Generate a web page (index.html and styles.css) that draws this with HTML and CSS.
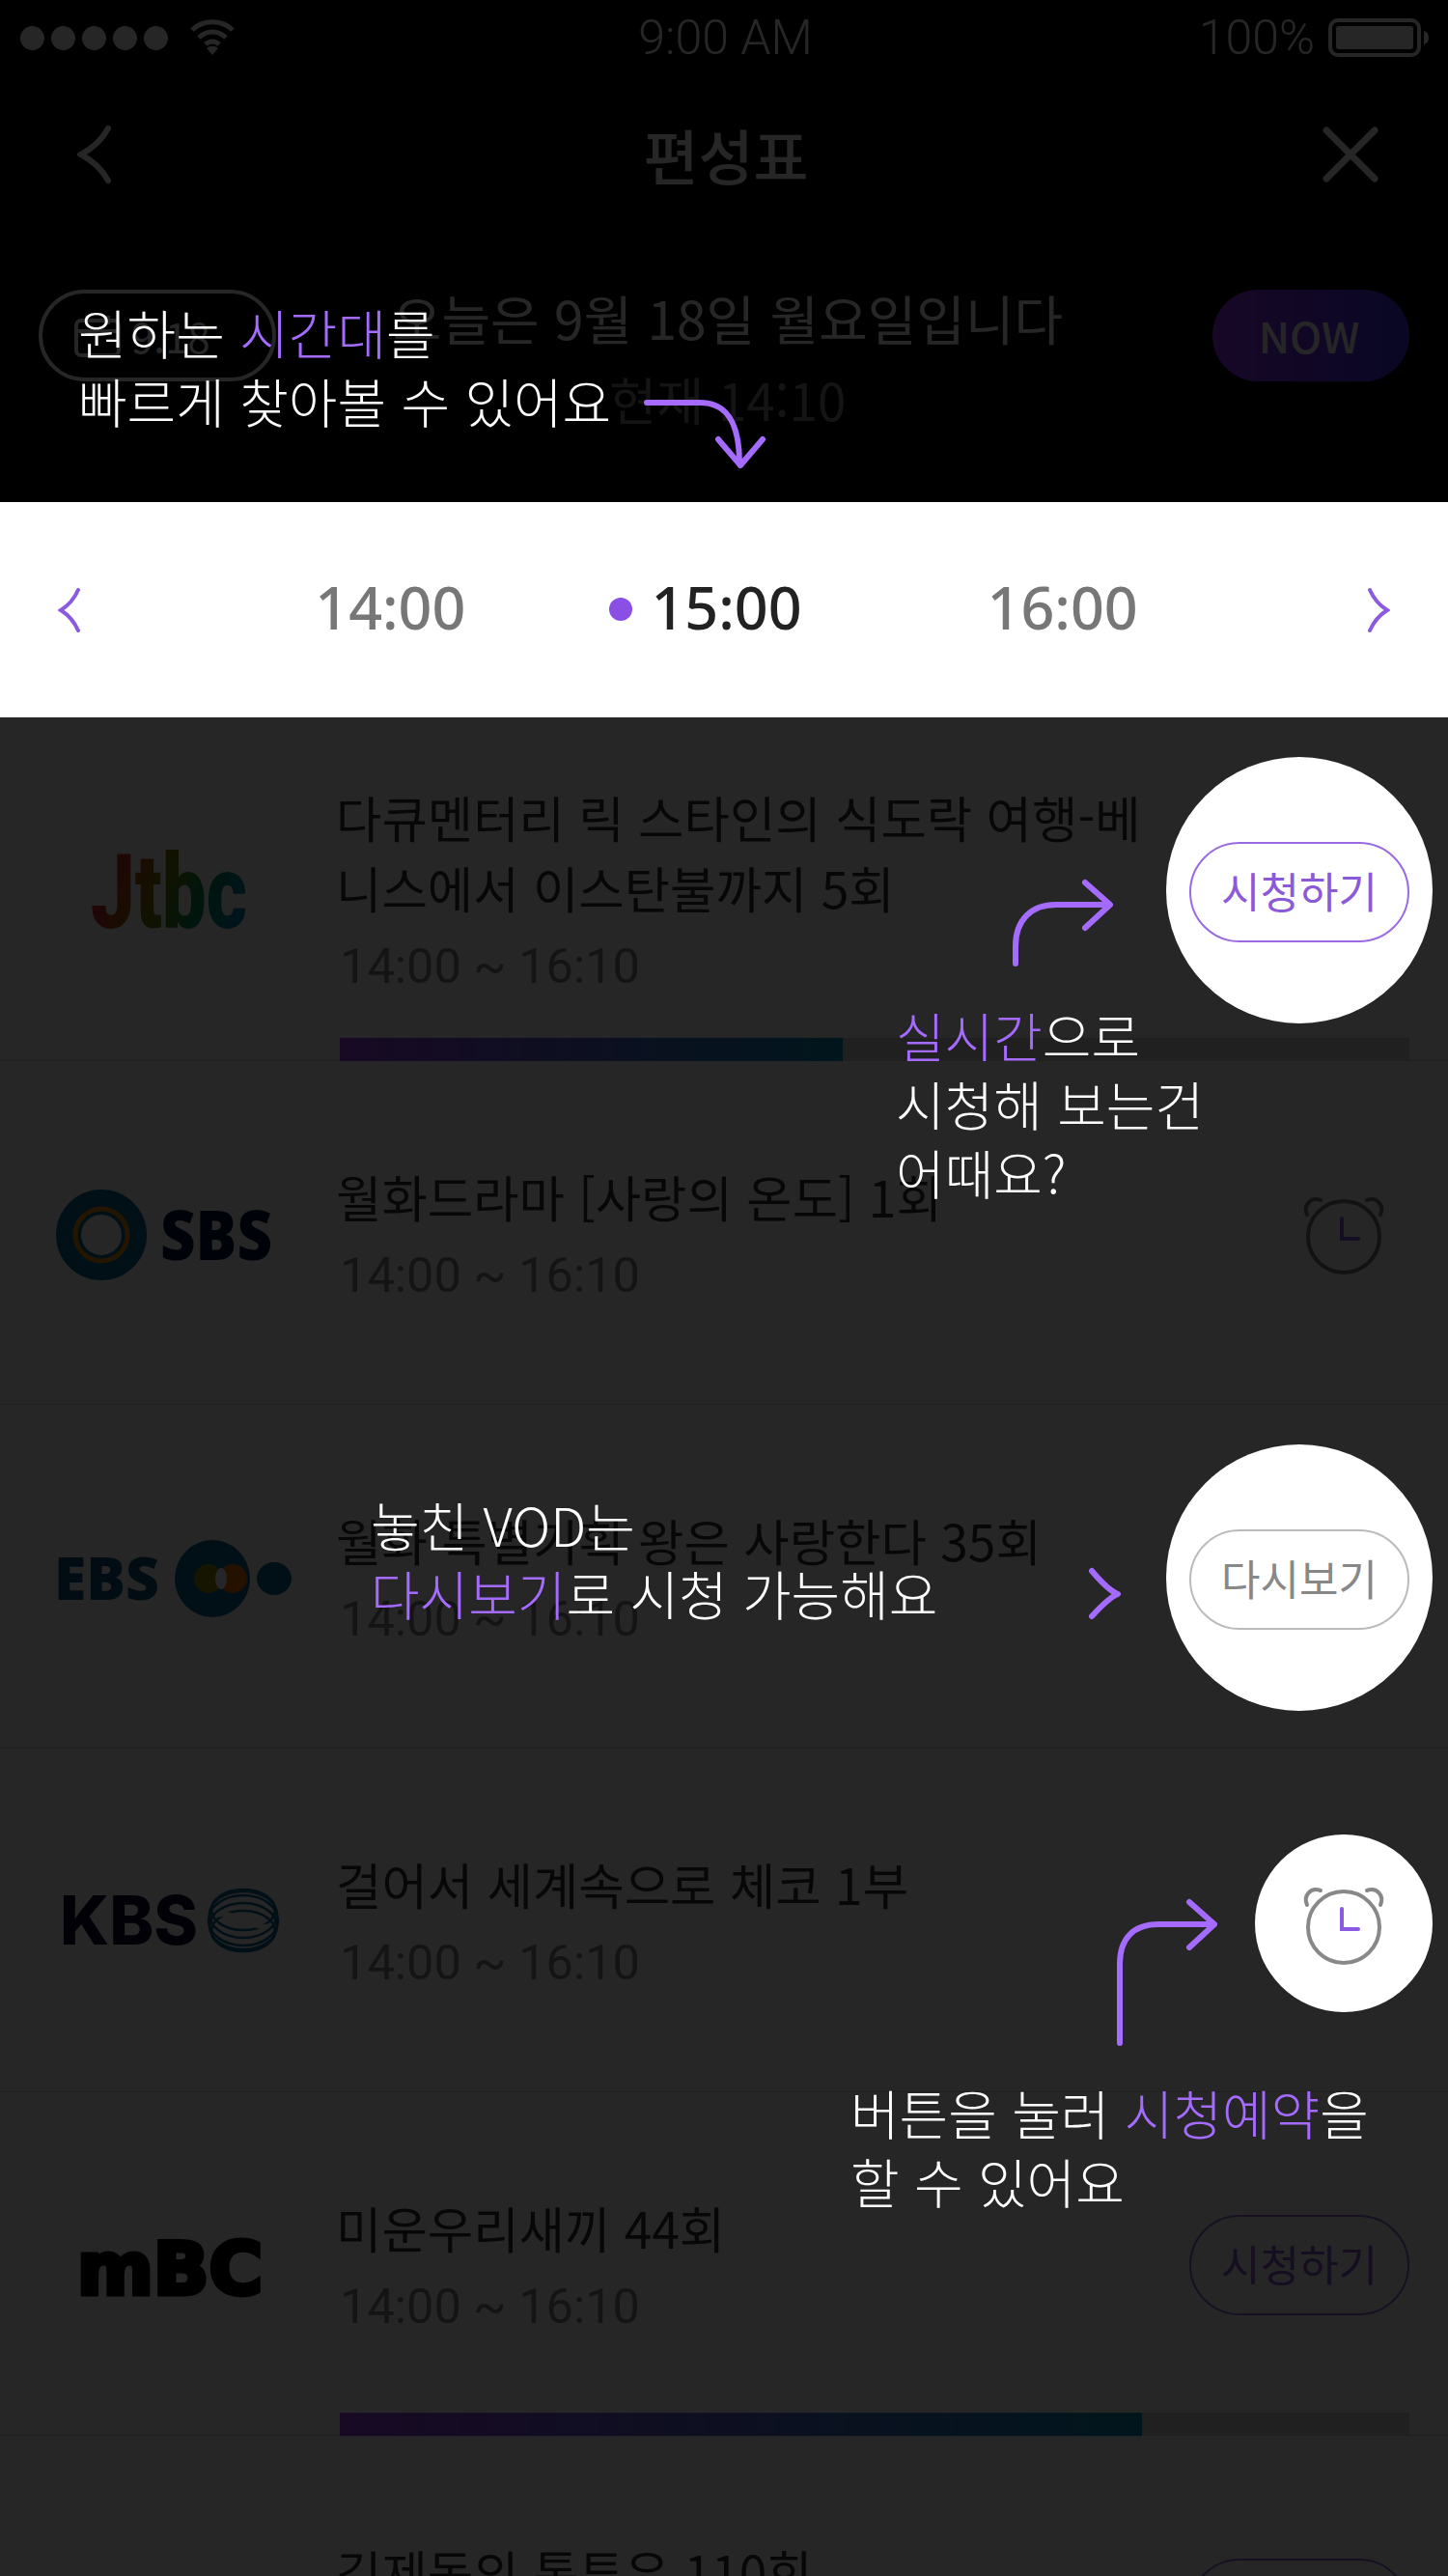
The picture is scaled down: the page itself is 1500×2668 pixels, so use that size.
FILE: index.html
```html
<!DOCTYPE html>
<html lang="ko">
  <head>
    <meta charset="utf-8" />
    <title>편성표</title>
    <link rel="stylesheet" href="styles.css">
  </head>

  <body>
    <div id="page">
      <header class="top dim">
        <div class="statusBar">
          <div class="signal">
            <span class="dot"></span><span class="dot"></span><span class="dot"></span><span class="dot"></span><span class="dot"></span>
            <svg class="wifi" width="48" height="38" viewBox="0 0 48 38" fill="none" stroke="#fff" stroke-width="5">
              <path d="M3 11 C14 0 34 0 45 11" />
              <path d="M10 19 C18 11 30 11 38 19" />
              <path d="M17 26 C21 22 27 22 31 26" />
              <path d="M24 37 L18 30 C22 27 26 27 30 30 Z" fill="#fff" stroke="none" />
            </svg>
          </div>
          <div class="clock">9:00 AM</div>
          <div class="power">
            <span>100%</span>
            <svg width="106" height="40" viewBox="0 0 106 40" fill="none">
              <rect x="2" y="2" width="92" height="36" rx="8" stroke="#fff" stroke-width="4" />
              <rect x="8" y="8" width="80" height="24" rx="3" fill="#fff" />
              <path d="M99 13 C103 14 104 17 104 20 C104 23 103 26 99 27 Z" fill="#fff" />
            </svg>
          </div>
        </div>

        <nav class="navBar">
          <svg width="36" height="60" viewBox="0 0 36 60" fill="none" stroke="#fff" stroke-width="6" stroke-linecap="round">
            <path d="M32 3 C25 16 15 24 4 30 C15 36 25 44 32 57" />
          </svg>
          <h1 class="navTitle">편성표</h1>
          <svg class="navClose" width="58" height="58" viewBox="0 0 58 58" fill="none" stroke="#fff" stroke-width="7" stroke-linecap="round">
            <path d="M4 4 L54 54 M54 4 L4 54" />
          </svg>
        </nav>

        <div class="dateRow">
          <div class="datePill">
            <svg width="50" height="44" viewBox="0 0 50 44" fill="none" stroke="#fff" stroke-width="4">
              <rect x="3" y="6" width="44" height="36" rx="5" />
              <path d="M3 17 H47 M14 1 V10 M36 1 V10" />
            </svg>
            <span>9.18</span>
          </div>
          <div class="dateText">
            <div class="dateToday">오늘은 9월 18일 월요일입니다</div>
            <div class="dateNow">현재 14:10</div>
          </div>
          <div class="nowPill">NOW</div>
        </div>
      </header>

      <div class="timeBar">
        <svg class="timeArrow" width="24" height="46" viewBox="0 0 24 46" fill="none">
          <path d="M21 2 C17 11 11 18 3 23 C11 28 17 35 21 44" />
        </svg>
        <div class="times">
          <span class="time">14:00</span>
          <span class="time timeCurrent">15:00</span>
          <span class="time">16:00</span>
        </div>
        <svg class="timeArrow" width="24" height="46" viewBox="0 0 24 46" fill="none">
          <path d="M3 2 C7 11 13 18 21 23 C13 28 7 35 3 44" />
        </svg>
      </div>

      <main class="list dim">
        <section class="row">
          <div class="logo">
            <svg width="348" height="120" viewBox="0 0 348 120">
              <defs>
                <linearGradient id="jtbcGrad" x1="0" y1="0.2" x2="1" y2="0.5">
                  <stop offset="0" stop-color="#ff0050" />
                  <stop offset="0.3" stop-color="#b05010" />
                  <stop offset="0.5" stop-color="#708000" />
                  <stop offset="0.75" stop-color="#00905a" />
                  <stop offset="1" stop-color="#0088b8" />
                </linearGradient>
              </defs>
              <text class="logoJtbc" x="94" y="100" textLength="162" lengthAdjust="spacingAndGlyphs" fill="url(#jtbcGrad)">Jtbc</text>
            </svg>
          </div>
          <div class="info">
            <div class="title">다큐멘터리 릭 스타인의 식도락 여행-베<br>니스에서 이스탄불까지 5회</div>
            <div class="hours">14:00 ~ 16:10</div>
          </div>
          <div class="action"><span class="btn btnLive">시청하기</span></div>
        </section>
        <div class="progress"><div class="progressFill" style="width: 47%"></div></div>

        <section class="row">
          <div class="logo">
            <svg width="348" height="120" viewBox="0 0 348 120">
              <circle cx="105" cy="62" r="34" fill="none" stroke="#0a6a9a" stroke-width="26" />
              <circle cx="105" cy="62" r="27" fill="none" stroke="#f09000" stroke-width="5" />
              <text class="logoSbs" x="166" y="88" textLength="116" lengthAdjust="spacingAndGlyphs">SBS</text>
            </svg>
          </div>
          <div class="info">
            <div class="title">월화드라마 [사랑의 온도] 1회</div>
            <div class="hours">14:00 ~ 16:10</div>
          </div>
          <div class="action">
            <svg class="alarm" width="136" height="136" viewBox="0 0 136 136" fill="none" stroke="#777" stroke-width="4" stroke-linecap="round">
              <circle cx="68" cy="72" r="37" />
              <path d="M30 49 C26 40 33 30 44 34 M106 49 C110 40 103 30 92 34" />
              <path class="alarmHands" d="M66 53 V74 H83" />
            </svg>
          </div>
        </section>

        <section class="row">
          <div class="logo">
            <svg width="348" height="120" viewBox="0 0 348 120">
              <text class="logoEbs" x="56" y="84" textLength="109" lengthAdjust="spacingAndGlyphs">EBS</text>
              <ellipse cx="220" cy="62" rx="39" ry="40" fill="#0a6a9a" />
              <circle cx="216" cy="62" r="15" fill="#8a9000" />
              <circle cx="241" cy="62" r="15" fill="#f07000" />
              <ellipse cx="229" cy="62" rx="6" ry="11" fill="#fff" />
              <ellipse cx="284" cy="62" rx="18" ry="17" fill="#0a6a9a" />
            </svg>
          </div>
          <div class="info">
            <div class="title">월화 특별기획 왕은 사랑한다 35회</div>
            <div class="hours">14:00 ~ 16:10</div>
          </div>
          <div class="action"><span class="btn btnVod">다시보기</span></div>
        </section>

        <section class="row">
          <div class="logo">
            <svg width="348" height="120" viewBox="0 0 348 120">
              <text class="logoKbs" x="62" y="85" textLength="143" lengthAdjust="spacingAndGlyphs">KBS</text>
              <g fill="none" stroke="#0a6a9a" stroke-width="2.5">
                <ellipse cx="252" cy="49" rx="33" ry="21" />
                <ellipse cx="252" cy="54" rx="35" ry="24" />
                <ellipse cx="252" cy="60" rx="36" ry="26" />
                <ellipse cx="252" cy="66" rx="35" ry="24" />
                <ellipse cx="252" cy="71" rx="33" ry="21" />
              </g>
              <path d="M226 54 C244 50 262 70 278 66" fill="none" stroke="#fff" stroke-width="5" />
            </svg>
          </div>
          <div class="info">
            <div class="title">걸어서 세계속으로 체코 1부</div>
            <div class="hours">14:00 ~ 16:10</div>
          </div>
          <div class="action"></div>
        </section>

        <section class="row">
          <div class="logo">
            <svg width="348" height="120" viewBox="0 0 348 120">
              <text class="logoMbc" x="80" y="91" textLength="192" lengthAdjust="spacingAndGlyphs">mBC</text>
            </svg>
          </div>
          <div class="info">
            <div class="title">미운우리새끼 44회</div>
            <div class="hours">14:00 ~ 16:10</div>
          </div>
          <div class="action"><span class="btn btnLive">시청하기</span></div>
        </section>
        <div class="progress"><div class="progressFill" style="width: 75%"></div></div>

        <section class="row">
          <div class="logo"></div>
          <div class="info">
            <div class="title">김제동의 톡투유 110회</div>
            <div class="hours">14:00 ~ 16:10</div>
          </div>
          <div class="action"><span class="btn btnLive">시청하기</span></div>
        </section>
      </main>

      <!-- coach marks on top of the dimmed screen -->
      <div class="spot spotLive"><span class="btn btnLive">시청하기</span></div>
      <div class="spot spotVod"><span class="btn btnVod">다시보기</span></div>
      <div class="spot spotAlarm">
        <svg class="alarm" width="136" height="136" viewBox="0 0 136 136" fill="none" stroke="#888" stroke-width="4" stroke-linecap="round">
          <circle cx="68" cy="72" r="37" />
          <path d="M30 49 C26 40 33 30 44 34 M106 49 C110 40 103 30 92 34" />
          <path class="alarmHands" d="M66 53 V74 H83" />
        </svg>
      </div>

      <p class="coach coachTime">원하는 <em>시간대</em>를<br>빠르게 찾아볼 수 있어요</p>
      <p class="coach coachLive"><em>실시간</em>으로<br>시청해 보는건<br>어때요?</p>
      <p class="coach coachVod">놓친 VOD는<br><em>다시보기</em>로 시청 가능해요</p>
      <p class="coach coachAlarm">버튼을 눌러 <em>시청예약</em>을<br>할 수 있어요</p>

      <svg class="arrows" width="1500" height="2668" viewBox="0 0 1500 2668" fill="none">
        <path d="M670 417 H725 C752 417 766 436 766 480 M744 455 L767 482 L790 455" />
        <path d="M1052 998 V980 C1052 953 1068 937 1094 937 H1148 M1124 914 L1150 937 L1124 961" />
        <path d="M1131 1627 C1142 1640 1150 1648 1158 1651 C1150 1654 1142 1662 1131 1674" />
        <path d="M1160 2116 V2034 C1160 2008 1174 1993 1200 1993 H1256 M1232 1970 L1258 1993 L1232 2017" />
      </svg>
    </div>
  </body>
</html>
```
FILE: styles.css
```css
* {
  box-sizing: border-box;
}

body {
  margin: 0;
  background-color: #000;
  font-family: "Noto Sans CJK KR", "Noto Sans", sans-serif;
}

#page {
  position: relative;
  width: 1500px;
  height: 2668px;
  overflow: hidden;
}

/* the grey layer of the tutorial, the time bar stays out of it */
.dim {
  position: relative;
}

.dim::after {
  content: "";
  position: absolute;
  inset: 0;
  background-color: rgba(0, 0, 0, 0.85);
}

.top {
  height: 520px;
  background-color: #000;
  color: #fff;
}

.statusBar {
  display: grid;
  grid-template-columns: 1fr auto 1fr;
  align-items: center;
  height: 78px;
  padding: 0 18px 0 21px;
}

.signal {
  display: flex;
  align-items: center;
  gap: 7px;
}

.dot {
  width: 25px;
  height: 25px;
  border-radius: 50%;
  background-color: #fff;
}

.wifi {
  margin-left: 15px;
}

.clock {
  font-family: Roboto, sans-serif;
  font-size: 50px;
  font-weight: 300;
}

.power {
  display: flex;
  justify-content: flex-end;
  align-items: center;
  gap: 14px;
  font-family: Roboto, sans-serif;
  font-size: 50px;
  font-weight: 300;
}

.navBar {
  display: grid;
  grid-template-columns: 1fr auto 1fr;
  align-items: center;
  height: 164px;
  padding: 0 72px 0 80px;
}

.navClose {
  justify-self: end;
}

.navTitle {
  margin: 0 0 0 -4px;
  font-size: 62px;
  font-weight: 500;
  line-height: 1;
}

.dateRow {
  display: grid;
  grid-template-columns: 246px 1fr 204px;
  align-items: start;
  padding: 58px 40px 0;
}

.datePill {
  display: flex;
  align-items: center;
  gap: 10px;
  height: 95px;
  padding-left: 32px;
  border: 4px solid #fff;
  border-radius: 48px;
  font-size: 42px;
}

.dateText {
  padding-right: 34px;
  text-align: center;
}

.dateToday {
  font-size: 55px;
  line-height: 56px;
}

.dateNow {
  margin-top: 24px;
  font-size: 53px;
  line-height: 66px;
  color: #888;
}

.nowPill {
  height: 95px;
  padding-right: 4px;
  border-radius: 48px;
  background: linear-gradient(90deg, #a030ff, #3a30f0);
  font-size: 44px;
  font-weight: 500;
  line-height: 95px;
  text-align: center;
}

.timeBar {
  display: flex;
  justify-content: space-between;
  align-items: center;
  height: 223px;
  padding: 0 60px;
  background-color: #fff;
}

.timeArrow {
  stroke: #8a5ae0;
  stroke-width: 4;
  stroke-linecap: round;
}

.times {
  display: flex;
  gap: 192px;
  margin: 0 0 6px 5px;
  font-family: "Noto Sans", sans-serif;
  font-size: 61px;
  font-weight: 500;
  line-height: 1;
  color: #777;
}

.timeCurrent {
  position: relative;
  color: #222;
}

.timeCurrent::before {
  content: "";
  position: absolute;
  left: -43px;
  top: 21px;
  width: 24px;
  height: 24px;
  border-radius: 50%;
  background-color: #8a50e6;
}

.list {
  background-color: #fff;
  height: 1925px;
}

.row {
  display: flex;
  align-items: center;
  height: 356px;
  border-bottom: 1px solid #d8d8d8;
  color: #333;
}

.logo {
  flex: none;
  display: flex;
  width: 348px;
  height: 120px;
}

.info {
  flex: 1;
  padding-top: 5px;
}

.title {
  font-size: 51.5px;
  line-height: 73px;
  white-space: nowrap;
}

.hours {
  margin: 10px 0 0 4px;
  font-family: Roboto, sans-serif;
  font-size: 50.5px;
  line-height: 72px;
  color: #888;
}

.action {
  flex: none;
  display: flex;
  justify-content: flex-end;
  align-items: center;
  width: 292px;
  padding-right: 40px;
}

.progress {
  height: 24px;
  margin: -24px 40px 0 352px;
  background-color: #d4d4d4;
  position: relative;
}

.progressFill {
  height: 100%;
  background: linear-gradient(90deg, #a040f0, #0a90c0);
}

.btn {
  display: flex;
  justify-content: center;
  align-items: center;
  flex: none;
  width: 228px;
  height: 104px;
  margin-top: 3px;
  padding-bottom: 4px;
  border: 2px solid;
  border-radius: 52px;
  background-color: #fff;
  font-size: 44px;
}

.btnLive {
  border-color: #9a6ae0;
  color: #8a5ad8;
}

.btnVod {
  border-color: #bbb;
  color: #888;
}

.alarmHands {
  stroke: #8a5ae0;
}

/* spotlight circles */
.spot {
  position: absolute;
  display: flex;
  justify-content: center;
  align-items: center;
  border-radius: 50%;
  background-color: #fff;
}

.spotLive {
  left: 1208px;
  top: 784px;
  width: 276px;
  height: 276px;
}

.spotVod {
  left: 1208px;
  top: 1496px;
  width: 276px;
  height: 276px;
}

.spotAlarm {
  left: 1300px;
  top: 1900px;
  width: 184px;
  height: 184px;
}

.coach {
  position: absolute;
  margin: 0;
  font-size: 55px;
  font-weight: 300;
  line-height: 71px;
  color: #fff;
  white-space: nowrap;
}

.coach em {
  font-style: normal;
  color: #a56bff;
}

.coachTime {
  left: 81px;
  top: 308px;
}

.coachLive {
  left: 928px;
  top: 1036px;
}

.coachVod {
  left: 384px;
  top: 1543px;
}

.coachAlarm {
  left: 881px;
  top: 2152px;
}

.arrows {
  position: absolute;
  left: 0;
  top: 0;
  stroke: #a56bff;
  stroke-width: 6;
  stroke-linecap: round;
  stroke-linejoin: round;
}

/* station logos */
.logoJtbc {
  font-family: Roboto, sans-serif;
  font-size: 108px;
  font-weight: 900;
}

.logoSbs {
  font-family: "Open Sans", sans-serif;
  font-size: 70px;
  font-weight: 800;
  fill: #001040;
}

.logoEbs {
  font-family: "Open Sans", sans-serif;
  font-size: 62px;
  font-weight: 800;
  fill: #0a5a80;
}

.logoKbs {
  font-family: Inter, sans-serif;
  font-size: 70px;
  font-weight: 800;
  fill: #0a0a30;
}

.logoMbc {
  font-family: "DejaVu Sans", sans-serif;
  font-size: 74px;
  font-weight: 700;
  fill: #000;
  stroke: #000;
  stroke-width: 5;
}
```
